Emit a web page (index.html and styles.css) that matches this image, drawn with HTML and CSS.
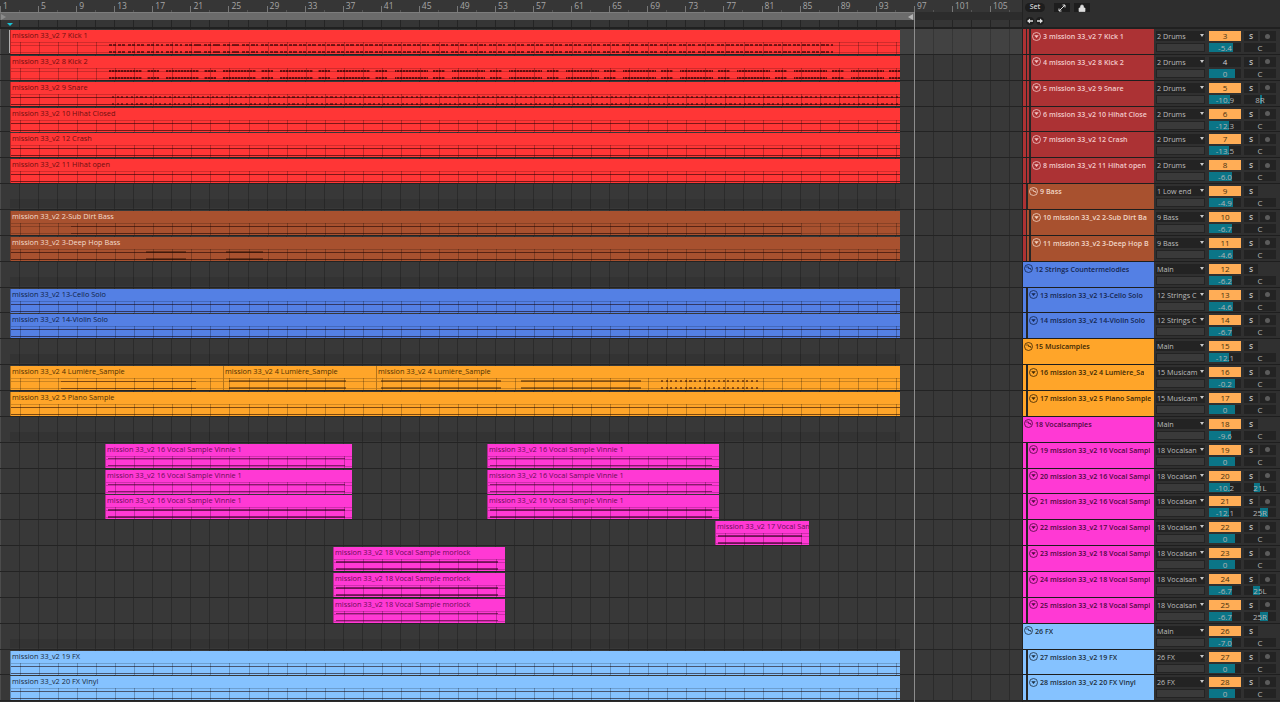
FILE: index.html
```html
<!DOCTYPE html>
<html lang="en">
<head>
  <meta charset="UTF-8" />
  <title>mission 33 - Arrangement</title>
  <link rel="stylesheet" href="styles.css">
</head>
<body>
  <div class="app">
    <div class="arrangement">
      <div class="ruler" id="ruler"></div>
      <div class="scrub">
        <span class="loop-start"></span>
        <span class="loop-end"></span>
      </div>
      <div class="overview"><span class="playhead"></span></div>
      <div class="lanes" id="lanes"></div>
      <div class="end-line"></div>
    </div>
    <div class="mixer">
      <div class="mixer-top">
        <div class="top-row">
          <span class="set-btn">Set</span>
          <span class="square-btn">
            <svg width="8" height="8" viewBox="0 0 8 8"><path d="M1 7 7 1M4.5 1H7v2.5M1 4.5V7h2.5" fill="none" stroke="#ddd" stroke-width="1"/></svg>
          </span>
          <span class="square-btn">
            <svg width="8" height="8" viewBox="0 0 8 8"><path d="M1 4h6v3.5H1zM2.5 4V2.5a1.5 1.5 0 0 1 3 0V4" fill="#ddd" stroke="#ddd" stroke-width=".7"/></svg>
          </span>
        </div>
        <div class="top-row nav-row">
          <span class="nav-btn">
            <svg width="6" height="6" viewBox="0 0 6 6"><path d="M0 3 3 .5v1.7h3v1.6H3v1.7z" fill="#ddd"/></svg>
          </span>
          <span class="nav-btn">
            <svg width="6" height="6" viewBox="0 0 6 6"><path d="M6 3 3 .5v1.7H0v1.6h3v1.7z" fill="#ddd"/></svg>
          </span>
        </div>
      </div>
      <div class="tracks" id="tracks"></div>
    </div>
  </div>
  <script src="script.js"></script>
</body>
</html>
```

FILE: styles.css
```css
* {
  box-sizing: border-box;
}

body {
  margin: 0;
  height: 702px;
  overflow: hidden;
  background: #2c2c2c;
  font-family: "Open Sans", "Liberation Sans", sans-serif;
  font-size: 7.5px;
}

.app {
  display: flex;
  height: 702px;
  overflow: hidden;
}

/* arrangement side */
.arrangement {
  position: relative;
  width: 1023px;
  flex: none;
  overflow: hidden;
  border-right: 1px solid #222;
}

.ruler {
  display: flex;
  height: 12px;
  background: #363636;
  overflow: hidden;
}

.bar {
  position: relative;
  flex: none;
  width: 38.08px;
  padding: 1px 0 0 3px;
  color: #a6a6a6;
  font-size: 8.5px;
  line-height: 10px;
}

.bar::before {
  content: "";
  position: absolute;
  left: 0;
  bottom: 0;
  width: 1px;
  height: 6px;
  background: #777;
}

.bar::after {
  content: "";
  position: absolute;
  left: 19px;
  bottom: 0;
  width: 1px;
  height: 2px;
  background: #555;
}

.scrub {
  position: relative;
  display: flex;
  justify-content: space-between;
  align-items: center;
  width: 914px;
  height: 8px;
  padding: 0 1px;
  background: #6b6b6b;
  border-top: 1px solid #7d7d7d;
}

.loop-start {
  border: 3px solid transparent;
  border-left: 5px solid #8c8c8c;
  border-right: 0;
}

.loop-end {
  border: 3px solid transparent;
  border-right: 5px solid #b4b4b4;
  border-left: 0;
}

.overview {
  position: relative;
  height: 9px;
  background: repeating-linear-gradient(90deg, #242424 0 1px, #353535 1px 19.04px);
  border-bottom: 2px solid #202020;
}

.playhead {
  position: absolute;
  left: 7px;
  top: 3px;
  border: 3px solid transparent;
  border-top: 3px solid #19c3d6;
  border-bottom: 0;
}

.lanes {
  background: repeating-linear-gradient(90deg, #2b2b2b 0 1px, #383838 1px 19.04px);
}

.lane {
  position: relative;
  height: 25.87px;
  border-bottom: 1px solid #232323;
}

.lane::before {
  content: "";
  position: absolute;
  left: 0;
  top: 0;
  bottom: 0;
  width: 1px;
  background: #4c4c4c;
}

.lane.sel {
  background: linear-gradient(90deg, transparent 900px, rgba(255, 255, 255, 0.05) 900px);
}

.lane.sel::after {
  content: "";
  position: absolute;
  left: 9px;
  top: 1px;
  bottom: 1px;
  width: 1px;
  background: #b0b0b0;
}

.lane.group::after {
  content: "";
  position: absolute;
  left: 10px;
  width: 890px;
  top: 15px;
  height: 9px;
  background: rgba(0, 0, 0, 0.08);
}

.end-line {
  position: absolute;
  left: 914px;
  top: 12px;
  bottom: 0;
  width: 1px;
  background: #8d8d8d;
}

.clip {
  position: absolute;
  top: 1px;
  height: 24px;
  overflow: hidden;
  border-left: 1px solid rgba(0, 0, 0, 0.3);
}

.clip-name {
  height: 12px;
  padding-left: 1px;
  line-height: 10px;
  font-size: 7.35px;
  white-space: nowrap;
  overflow: hidden;
}

.clip-body {
  position: relative;
  height: 12px;
  border-top: 1px solid rgba(0, 0, 0, 0.18);
  background: repeating-linear-gradient(90deg,
    rgba(0, 0, 0, 0.25) var(--o) calc(var(--o) + 1px),
    transparent calc(var(--o) + 1px) calc(var(--o) + 19.04px));
}

.clip-body::before,
.clip-body::after {
  content: "";
  position: absolute;
  left: 0;
  right: 0;
  height: 1px;
  background: rgba(0, 0, 0, 0.2);
}

.clip-body::before {
  top: 2px;
}

.clip-body::after {
  top: 9px;
}

.wave {
  position: absolute;
  height: 2px;
  filter: blur(0.3px);
}

.wave.a { top: 1px; }
.wave.b { top: 8px; }

.wave.dots {
  background: repeating-linear-gradient(90deg, rgba(40, 0, 0, 0.6) 0 3px, transparent 3px 4px, rgba(40, 0, 0, 0.6) 4px 7px, transparent 7px 9.5px);
}

.wave.dash {
  background: repeating-linear-gradient(90deg, rgba(40, 0, 0, 0.7) 0 2px, rgba(40, 0, 0, 0.3) 2px 3px);
  -webkit-mask-image: repeating-linear-gradient(90deg, #000 0 33px, transparent 33px 38px, #000 38px 50px, transparent 50px 57.1px);
  mask-image: repeating-linear-gradient(90deg, #000 0 33px, transparent 33px 38px, #000 38px 50px, transparent 50px 57.1px);
}

.wave.tick {
  background: repeating-linear-gradient(90deg, rgba(40, 0, 0, 0.5) 0 2px, transparent 2px 4.75px);
}

.wave.line {
  height: 1px;
  background: rgba(30, 0, 0, 0.45);
}

.wave.line.a { top: 2px; }
.wave.line.b { top: 9px; }

.wave.blob {
  background: rgba(30, 10, 0, 0.42);
}

.wave.solid {
  height: 1.5px;
  background: rgba(40, 0, 20, 0.55);
}

/* track headers and controls */
.mixer {
  flex: 1;
  min-width: 0;
}

.mixer-top {
  height: 29px;
  padding: 3px 0 0 2px;
  background: #2e2e2e;
  border-bottom: 2px solid #202020;
}

.top-row {
  display: flex;
  align-items: center;
  gap: 4px;
}

.nav-row {
  margin: 5px 0 0 1px;
  gap: 2px;
}

.set-btn {
  width: 20px;
  height: 9px;
  margin-right: 5px;
  border-radius: 5px;
  background: #1d1d1d;
  color: #d2d2d2;
  text-align: center;
  line-height: 8px;
  font-size: 7px;
  font-weight: 600;
}

.square-btn {
  display: flex;
  align-items: center;
  justify-content: center;
  width: 16px;
  height: 9px;
  background: #1d1d1d;
}

.nav-btn {
  display: flex;
  align-items: center;
  justify-content: center;
  width: 8px;
  height: 8px;
  border-radius: 50%;
  background: #1d1d1d;
}

.track {
  display: flex;
  height: 25.87px;
  border-bottom: 1px solid #1e1e1e;
}

.stripe {
  flex: none;
  border-right: 1px solid #262626;
}

.stripe.outer {
  width: 4px;
}

.stripe.inner {
  width: 3px;
}

.title {
  flex: 1;
  min-width: 0;
  display: flex;
  align-items: flex-start;
  gap: 2px;
  padding: 2px 0 0 1px;
  border-left: 1px solid #262626;
  font-size: 7.1px;
  font-weight: 600;
  line-height: 10px;
  white-space: nowrap;
  overflow: hidden;
}

.title.top-level {
  border-left: 0;
}

.title svg {
  flex: none;
  margin-top: 0.5px;
}

.title span {
  min-width: 0;
  overflow: hidden;
}

.controls {
  flex: none;
  width: 126px;
  display: grid;
  grid-template-columns: 51px 33px 14px 16px;
  grid-template-rows: 10px 9px;
  column-gap: 2px;
  row-gap: 2px;
  align-content: start;
  padding: 2px 0 0 2px;
  background: #303030;
  color: #b4b4b4;
  text-align: center;
  line-height: 9px;
  font-size: 8px;
}

.controls span {
  display: block;
  overflow: hidden;
}

.route {
  position: relative;
  margin-right: 2px;
  padding: 0 7px 0 1px;
  background: #232323;
  text-align: left;
  white-space: nowrap;
  line-height: 10px;
  font-size: 7.2px;
  color: #bdbdbd;
}

.route::after {
  content: "";
  position: absolute;
  right: 1px;
  top: 3px;
  border: 2.5px solid transparent;
  border-top: 3px solid #c8c8c8;
  border-bottom: 0;
}

.slot {
  margin-right: 2px;
  background: #3a3a3a;
  border: 1px solid #232323;
}

.num {
  margin-right: 1px;
  background: #232323;
  color: #cfcfcf;
}

.num.armed {
  background: #ffad56;
  color: #47310f;
}

.vol {
  position: relative;
  margin-right: 1px;
  background: #232323;
}

.vol-fill {
  position: absolute;
  left: 0;
  top: 0;
  bottom: 0;
  background: #0b7587;
}

.vol-text {
  position: relative;
}

.solo {
  background: #232323;
  font-size: 7.5px;
  font-weight: 700;
  line-height: 10px;
}

.rec {
  position: relative;
  background: #232323;
}

.rec::after {
  content: "";
  position: absolute;
  left: 5px;
  top: 2.5px;
  width: 5px;
  height: 5px;
  border-radius: 50%;
  background: #5c5c5c;
}

.pan {
  position: relative;
  grid-column: span 2;
  background: #232323;
}

.pan-fill {
  position: absolute;
  top: 0;
  bottom: 0;
  background: #0b7587;
}

.pan-text {
  position: relative;
}
```

FILE: script.js
```js
const colors = {
  red: { clip: '#ff3636', title: '#ac3234', clipText: '#6e0f0f', titleText: '#f2c9c9' },
  bass: { clip: '#a8512f', title: '#a8512f', clipText: '#f4dccd', titleText: '#f2d6c6' },
  blue: { clip: '#5480e4', title: '#5480e4', clipText: '#0f1f44', titleText: '#14264f' },
  orange: { clip: '#ffa529', title: '#ffa529', clipText: '#4f3003', titleText: '#3c2705' },
  pink: { clip: '#ff39d4', title: '#ff39d4', clipText: '#6a0d55', titleText: '#4d0a3e' },
  sky: { clip: '#85c2ff', title: '#85c2ff', clipText: '#1a2a3a', titleText: '#1e2f40' }
};

const p = 'mission 33_v2 ';
const vinnie = p + '16 Vocal Sample Vinnie 1';
const morlock = p + '18 Vocal Sample morlock';
const vinnieClips = [[105, 352, vinnie], [487, 719, vinnie]];
const full = (name) => [[10, 900, name]];

// n, header text, parent stripes, colour, routing, volume, pan, clips, waves
const tracks = [
  { n: 3, name: p + '7 Kick 1', nest: ['red', 'red'], color: 'red', route: '2 Drums', vol: -5.4, pan: 'C', waves: [[108, 832, 'dots']] },
  { n: 4, name: p + '8 Kick 2', nest: ['red', 'red'], color: 'red', route: '2 Drums', vol: 0, pan: 'C', waves: [[108, 900, 'dash']], off: true },
  { n: 5, name: p + '9 Snare', nest: ['red', 'red'], color: 'red', route: '2 Drums', vol: -10.9, pan: '8R', waves: [[10, 900, 'line'], [111, 900, 'tick']] },
  { n: 6, name: p + '10 Hihat Close', clipName: p + '10 Hihat Closed', nest: ['red', 'red'], color: 'red', route: '2 Drums', vol: -12.3, pan: 'C', waves: [[10, 900, 'line']] },
  { n: 7, name: p + '12 Crash', nest: ['red', 'red'], color: 'red', route: '2 Drums', vol: -13.5, pan: 'C', waves: [[10, 900, 'line']] },
  { n: 8, name: p + '11 Hihat open', nest: ['red', 'red'], color: 'red', route: '2 Drums', vol: -6.0, pan: 'C', waves: [[10, 900, 'line']] },
  { n: 9, name: 'Bass', nest: ['red'], color: 'bass', route: '1 Low end', vol: -4.9, pan: 'C', group: true },
  { n: 10, name: p + '2-Sub Dirt Ba', clipName: p + '2-Sub Dirt Bass', nest: ['red', 'bass'], color: 'bass', route: '9 Bass', vol: -6.7, pan: 'C', waves: [[70, 800, 'line']] },
  { n: 11, name: p + '3-Deep Hop B', clipName: p + '3-Deep Hop Bass', nest: ['red', 'bass'], color: 'bass', route: '9 Bass', vol: -4.6, pan: 'C', waves: [[10, 900, 'line'], [145, 185, 'blob'], [225, 262, 'blob']] },
  { n: 12, name: 'Strings Countermelodies', nest: [], color: 'blue', route: 'Main', vol: -6.2, pan: 'C', group: true },
  { n: 13, name: p + '13-Cello Solo', nest: ['blue'], color: 'blue', route: '12 Strings C', vol: -4.6, pan: 'C', waves: [[10, 900, 'line']] },
  { n: 14, name: p + '14-Violin Solo', nest: ['blue'], color: 'blue', route: '12 Strings C', vol: -6.7, pan: 'C', waves: [[10, 900, 'line']] },
  { n: 15, name: 'Musicamples', nest: [], color: 'orange', route: 'Main', vol: -12.1, pan: 'C', group: true },
  { n: 16, name: p + '4 Lumière_Sa', nest: ['orange'], color: 'orange', route: '15 Musicam', vol: -0.2, pan: 'C',
    clips: [[10, 223, p + '4 Lumière_Sample'], [223, 376, p + '4 Lumière_Sample'], [376, 900, p + '4 Lumière_Sample']],
    waves: [[60, 195, 'line'], [228, 345, 'blob'], [380, 500, 'blob'], [520, 640, 'blob'], [660, 760, 'tick']] },
  { n: 17, name: p + '5 Piano Sample', nest: ['orange'], color: 'orange', route: '15 Musicam', vol: 0, pan: 'C', waves: [[10, 900, 'line']] },
  { n: 18, name: 'Vocalsamples', nest: [], color: 'pink', route: 'Main', vol: -9.6, pan: 'C', group: true },
  { n: 19, name: p + '16 Vocal Sampl', nest: ['pink'], color: 'pink', route: '18 Vocalsan', vol: 0, pan: 'C', clips: vinnieClips },
  { n: 20, name: p + '16 Vocal Sampl', nest: ['pink'], color: 'pink', route: '18 Vocalsan', vol: -10.2, pan: '21L', clips: vinnieClips },
  { n: 21, name: p + '16 Vocal Sampl', nest: ['pink'], color: 'pink', route: '18 Vocalsan', vol: -12.1, pan: '25R', clips: vinnieClips },
  { n: 22, name: p + '17 Vocal Sampl', nest: ['pink'], color: 'pink', route: '18 Vocalsan', vol: 0, pan: 'C', clips: [[715, 809, p + '17 Vocal Sam']] },
  { n: 23, name: p + '18 Vocal Sampl', nest: ['pink'], color: 'pink', route: '18 Vocalsan', vol: 0, pan: 'C', clips: [[333, 505, morlock]] },
  { n: 24, name: p + '18 Vocal Sampl', nest: ['pink'], color: 'pink', route: '18 Vocalsan', vol: -6.7, pan: '25L', clips: [[333, 505, morlock]] },
  { n: 25, name: p + '18 Vocal Sampl', nest: ['pink'], color: 'pink', route: '18 Vocalsan', vol: -6.7, pan: '25R', clips: [[333, 505, morlock]] },
  { n: 26, name: 'FX', nest: [], color: 'sky', route: 'Main', vol: -7.0, pan: 'C', group: true },
  { n: 27, name: p + '19 FX', nest: ['sky'], color: 'sky', route: '26 FX', vol: 0, pan: 'C', waves: [[10, 900, 'line']] },
  { n: 28, name: p + '20 FX Vinyl', nest: ['sky'], color: 'sky', route: '26 FX', vol: 0, pan: 'C', waves: [[10, 900, 'line']] }
];

// ruler
const ruler = document.getElementById('ruler');
for (let bar = 1; bar <= 105; bar += 4) {
  const el = document.createElement('div');
  el.className = 'bar';
  el.textContent = bar;
  ruler.appendChild(el);
}

function clipHtml(track, clip) {
  const [left, right, name] = clip;
  const c = colors[track.color];
  const offset = (19.04 - (left % 19.04)).toFixed(2);
  const list = track.waves || [[left + 2, right - 8, 'solid']];
  const waves = list.map(([start, end, kind]) => {
    const from = Math.max(start, left);
    const to = Math.min(end, right);
    if (to <= from) return '';
    const box = `left:${from - left}px;width:${to - from}px`;
    return `<div class="wave a ${kind}" style="${box}"></div><div class="wave b ${kind}" style="${box}"></div>`;
  }).join('');
  return `<div class="clip" style="left:${left}px;width:${right - left}px;background:${c.clip};color:${c.clipText}">
    <div class="clip-name">${name}</div>
    <div class="clip-body" style="--o:${offset}px">${waves}</div>
  </div>`;
}

const foldIcon = (color) => `<svg width="9" height="9" viewBox="0 0 9 9"><circle cx="4.5" cy="4.5" r="4" fill="none" stroke="${color}" stroke-width=".8"/><path d="M2.3 3.3h4.4L4.5 6z" fill="${color}"/></svg>`;
const groupIcon = (color) => `<svg width="9" height="9" viewBox="0 0 9 9"><circle cx="4.5" cy="4.5" r="4" fill="none" stroke="${color}" stroke-width=".8"/><path d="M2.2 3h2.4v1.5h2.2v1.5" fill="none" stroke="${color}" stroke-width=".8"/></svg>`;

function panHtml(pan) {
  if (pan === 'C') return '<span class="pan"><span class="pan-text">C</span></span>';
  const amount = parseInt(pan, 10) * 0.3;
  const side = pan.endsWith('R') ? `left:50%;width:${amount}px` : `right:50%;width:${amount}px`;
  return `<span class="pan"><span class="pan-fill" style="${side}"></span><span class="pan-text">${pan}</span></span>`;
}

const lanes = document.getElementById('lanes');
const list = document.getElementById('tracks');

tracks.forEach((t, i) => {
  const c = colors[t.color];

  // arrangement lane
  const lane = document.createElement('div');
  lane.className = 'lane' + (i === 0 ? ' sel' : '') + (t.group ? ' group' : '');
  const clips = t.group ? [] : (t.clips || full(t.clipName || t.name));
  lane.innerHTML = clips.map((clip) => clipHtml(t, clip)).join('');
  lanes.appendChild(lane);

  // track header
  const stripes = t.nest.map((name, depth) => {
    const kind = depth === 0 ? 'outer' : 'inner';
    return `<div class="stripe ${kind}" style="background:${colors[name].title}"></div>`;
  }).join('');
  const icon = t.group ? groupIcon(c.titleText) : foldIcon(c.titleText);
  const fill = Math.max(0, 82 + t.vol * 1.5);
  const row = document.createElement('div');
  row.className = 'track';
  row.innerHTML = `${stripes}
    <div class="title${t.nest.length ? '' : ' top-level'}" style="background:${c.title};color:${c.titleText}">${icon}<span>${t.n} ${t.name}</span></div>
    <div class="controls">
      <span class="route">${t.route}</span>
      <span class="num${t.off ? '' : ' armed'}">${t.n}</span>
      <span class="solo">S</span>
      ${t.group ? '<span></span>' : '<span class="rec"></span>'}
      <span class="slot"></span>
      <span class="vol"><span class="vol-fill" style="width:${fill}%"></span><span class="vol-text">${t.vol === 0 ? '0' : t.vol.toFixed(1)}</span></span>
      ${panHtml(t.pan)}
    </div>`;
  list.appendChild(row);
});
```
